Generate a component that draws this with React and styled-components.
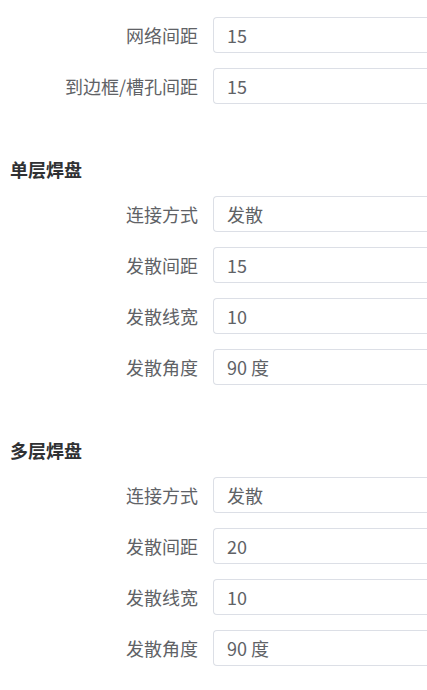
import React from "react";
import styled, { createGlobalStyle } from "styled-components";

const Global = createGlobalStyle`
  html, body {
    margin: 0;
    padding: 0;
    background: #ffffff;
    overflow: hidden;
  }
  body {
    font-family: "Noto Sans CJK SC", "Noto Sans", "Liberation Sans", sans-serif;
  }
`;

const Page = styled.div`
  padding: 17px 0 0 10px;
  display: flex;
  flex-direction: column;
`;

const Section = styled.section`
  display: flex;
  flex-direction: column;
  gap: 15px;
  margin-top: ${(p) => (p.$first ? "0" : "53px")};
`;

const Heading = styled.h3`
  margin: 0;
  height: 24px;
  line-height: 24px;
  font-size: 18px;
  font-weight: 700;
  color: #303133;
`;

const Row = styled.div`
  display: flex;
  align-items: center;
  gap: 15px;
`;

const Label = styled.label`
  width: 188px;
  flex: none;
  text-align: right;
  font-size: 18px;
  color: #606266;
  white-space: nowrap;
`;

const Field = styled.div`
  box-sizing: border-box;
  flex: 1;
  min-width: 0;
  height: 36px;
  border: 1px solid #dcdfe6;
  border-right: none;
  border-radius: 4px 0 0 4px;
  padding: 0 13px;
  display: flex;
  align-items: center;
  font-size: 18px;
  color: #606266;
  background: #fff;
`;

const FieldRow = ({ label, value }) => (
  <Row>
    <Label>{label}</Label>
    <Field>{value}</Field>
  </Row>
);

const pad = [
  ["连接方式", "发散"],
  ["发散间距", "15"],
  ["发散线宽", "10"],
  ["发散角度", "90 度"],
];

const multi = [
  ["连接方式", "发散"],
  ["发散间距", "20"],
  ["发散线宽", "10"],
  ["发散角度", "90 度"],
];

export default function App() {
  return (
    <Page>
      <Global />
      <Section $first>
        <FieldRow label="网络间距" value="15" />
        <FieldRow label="到边框/槽孔间距" value="15" />
      </Section>
      <Section>
        <Heading>单层焊盘</Heading>
        {pad.map(([l, v]) => (
          <FieldRow key={l} label={l} value={v} />
        ))}
      </Section>
      <Section>
        <Heading>多层焊盘</Heading>
        {multi.map(([l, v]) => (
          <FieldRow key={l} label={l} value={v} />
        ))}
      </Section>
    </Page>
  );
}
